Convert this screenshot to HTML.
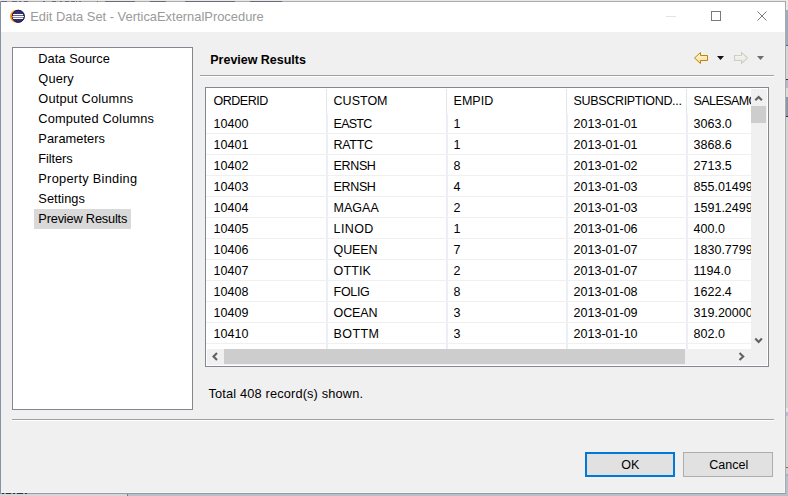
<!DOCTYPE html>
<html><head><meta charset="utf-8"><style>
html,body{margin:0;padding:0;width:788px;height:496px;overflow:hidden;background:#e6e6e6}
body{position:relative;font-family:"Liberation Sans", sans-serif}
.t{position:absolute;white-space:nowrap}
</style></head><body>
<div style="position:absolute;left:0;top:0;width:788px;height:496px;background:#e8e8e8"></div><div style="position:absolute;left:786px;top:0px;width:2px;height:10px;background:#e8e8e8"></div><div style="position:absolute;left:786px;top:10px;width:2px;height:35px;background:#9dabbf"></div><div style="position:absolute;left:786px;top:45px;width:2px;height:1px;background:#5a6070"></div><div style="position:absolute;left:786px;top:46px;width:2px;height:33px;background:#d6d6d6"></div><div style="position:absolute;left:786px;top:79px;width:2px;height:1px;background:#303030"></div><div style="position:absolute;left:786px;top:80px;width:2px;height:8px;background:#b8b8c8"></div><div style="position:absolute;left:786px;top:88px;width:2px;height:9px;background:#dcdcdc"></div><div style="position:absolute;left:786px;top:97px;width:2px;height:19px;background:#8c96ab"></div><div style="position:absolute;left:786px;top:116px;width:2px;height:1px;background:#303030"></div><div style="position:absolute;left:786px;top:117px;width:2px;height:291px;background:#d4d4d4"></div><div style="position:absolute;left:786px;top:408px;width:2px;height:4px;background:#e6e6e6"></div><div style="position:absolute;left:786px;top:412px;width:2px;height:4px;background:#b8bcd8"></div><div style="position:absolute;left:786px;top:416px;width:2px;height:51px;background:#d4d4d4"></div><div style="position:absolute;left:786px;top:467px;width:2px;height:1px;background:#707070"></div><div style="position:absolute;left:786px;top:468px;width:2px;height:6px;background:#d0d0d0"></div><div style="position:absolute;left:786px;top:474px;width:2px;height:2px;background:#9fb0d0"></div><div style="position:absolute;left:786px;top:476px;width:2px;height:20px;background:#b6bfcc"></div><div style="position:absolute;left:0;top:494px;width:127px;height:2px;background:#d6d6d6"></div><div style="position:absolute;left:127px;top:494px;width:1px;height:2px;background:#6a80a0"></div><div style="position:absolute;left:128px;top:494px;width:660px;height:2px;background:#b6bfcc"></div><div style="position:absolute;left:0;top:1px;width:784px;height:491px;border:1px solid #aaaaaa;border-left-color:#8494a8;border-bottom-color:#959ca4;background:#f0f0f0"></div><div style="position:absolute;left:784px;top:32px;width:1px;height:461px;background:#f5f5f5"></div><div style="position:absolute;left:1px;top:492px;width:784px;height:1px;background:#f5f5f5"></div><div style="position:absolute;left:1px;top:1px;width:6px;height:1px;background:#6a6a78"></div><div style="position:absolute;left:12px;top:1px;width:5px;height:1px;background:#6a6a78"></div><div style="position:absolute;left:19px;top:1px;width:2px;height:1px;background:#6a6a78"></div><div style="position:absolute;left:24px;top:1px;width:4px;height:1px;background:#6a6a78"></div><div style="position:absolute;left:43px;top:1px;width:2px;height:1px;background:#6a6a78"></div><div style="position:absolute;left:52px;top:1px;width:4px;height:1px;background:#6a6a78"></div><div style="position:absolute;left:60px;top:1px;width:2px;height:1px;background:#6a6a78"></div><div style="position:absolute;left:65px;top:1px;width:4px;height:1px;background:#6a6a78"></div><div style="position:absolute;left:71px;top:1px;width:4px;height:1px;background:#6a6a78"></div><div style="position:absolute;left:76px;top:1px;width:1px;height:1px;background:#6a6a78"></div><div style="position:absolute;left:79px;top:1px;width:2px;height:1px;background:#6a6a78"></div><div style="position:absolute;left:97px;top:1px;width:1px;height:1px;background:#6a6a78"></div><div style="position:absolute;left:105px;top:1px;width:30px;height:1px;background:#6a6a78"></div><div style="position:absolute;left:150px;top:1px;width:16px;height:1px;background:#6a6a78"></div><div style="position:absolute;left:185px;top:1px;width:50px;height:1px;background:#6a6a78"></div><div style="position:absolute;left:250px;top:1px;width:32px;height:1px;background:#6a6a78"></div><div style="position:absolute;left:2px;top:493px;width:2px;height:1px;background:#303040"></div><div style="position:absolute;left:6px;top:493px;width:5px;height:1px;background:#303040"></div><div style="position:absolute;left:13px;top:493px;width:2px;height:1px;background:#303040"></div><div style="position:absolute;left:17px;top:493px;width:6px;height:1px;background:#303040"></div><div style="position:absolute;left:25px;top:493px;width:2px;height:1px;background:#303040"></div><div style="position:absolute;left:1px;top:2px;width:784px;height:30px;background:#fff"></div><svg style="position:absolute;left:0;top:0" width="60" height="32" viewBox="0 0 60 32">
<circle cx="16.5" cy="16.25" r="6.45" fill="#fb9a1c"/>
<circle cx="18.3" cy="16.25" r="6.45" fill="#372d72"/>
<circle cx="18.3" cy="16.25" r="6.0" fill="none" stroke="#1d1745" stroke-width="0.9"/>
<rect x="13.0" y="13.9" width="10.1" height="1.25" rx="0.5" fill="#fff"/>
<rect x="12.3" y="15.9" width="11.7" height="1.25" rx="0.5" fill="#fff"/>
<rect x="13.0" y="17.8" width="10.1" height="1.25" rx="0.5" fill="#fff"/>
</svg><div class="t" style="left:30.20px;top:9.03px;font-size:12.9px;line-height:15px;color:#9a9a9a;">Edit Data Set - VerticaExternalProcedure</div>
<svg style="position:absolute;left:650px;top:0" width="130" height="32" viewBox="650 0 130 32">
<rect x="666" y="16" width="10" height="1" fill="#e3e3e3"/>
<rect x="711.5" y="11.5" width="9" height="9" fill="none" stroke="#7a7a7a" stroke-width="1"/>
<path d="M757.5 11.5 L766.5 20.5 M766.5 11.5 L757.5 20.5" stroke="#7a7a7a" stroke-width="1" fill="none"/>
</svg><div style="position:absolute;left:12px;top:47px;width:179px;height:361px;border:1px solid #828790;background:#fff"></div><div style="position:absolute;left:34px;top:209px;width:97px;height:20px;background:#d9d9d9"></div><div class="t" style="left:38.30px;top:51.06px;font-size:12.8px;line-height:15px;color:#000;letter-spacing:0.05px;">Data Source</div>
<div class="t" style="left:38.30px;top:71.06px;font-size:12.8px;line-height:15px;color:#000;letter-spacing:0.15px;">Query</div>
<div class="t" style="left:38.30px;top:91.06px;font-size:12.8px;line-height:15px;color:#000;letter-spacing:0.18px;">Output Columns</div>
<div class="t" style="left:38.30px;top:111.06px;font-size:12.8px;line-height:15px;color:#000;letter-spacing:0.17px;">Computed Columns</div>
<div class="t" style="left:38.30px;top:131.06px;font-size:12.8px;line-height:15px;color:#000;letter-spacing:0.06px;">Parameters</div>
<div class="t" style="left:38.30px;top:151.06px;font-size:12.8px;line-height:15px;color:#000;letter-spacing:-0.1px;">Filters</div>
<div class="t" style="left:38.30px;top:171.06px;font-size:12.8px;line-height:15px;color:#000;letter-spacing:0.28px;">Property Binding</div>
<div class="t" style="left:38.30px;top:191.06px;font-size:12.8px;line-height:15px;color:#000;letter-spacing:0.05px;">Settings</div>
<div class="t" style="left:38.30px;top:211.06px;font-size:12.8px;line-height:15px;color:#000;letter-spacing:-0.19px;">Preview Results</div>
<div class="t" style="left:210.30px;top:52.57px;font-size:12.5px;line-height:15px;color:#000;font-weight:bold;letter-spacing:-0.02px;">Preview Results</div>
<div style="position:absolute;left:200px;top:75px;width:574px;height:1px;background:#a0a0a0"></div><div style="position:absolute;left:200px;top:76px;width:574px;height:1px;background:#fff"></div><svg style="position:absolute;left:680px;top:40px" width="100" height="30" viewBox="680 40 100 30">
<defs>
<linearGradient id="ga" x1="0" y1="0" x2="0" y2="1"><stop offset="0" stop-color="#fffbea"/><stop offset="1" stop-color="#fcdc82"/></linearGradient>
<linearGradient id="gb" x1="0" y1="0" x2="0" y2="1"><stop offset="0" stop-color="#fafaf6"/><stop offset="1" stop-color="#e4e4dc"/></linearGradient>
</defs>
<path d="M694.5 58 L700.5 52.5 L700.5 55.5 L707.5 55.5 L707.5 60.5 L700.5 60.5 L700.5 63.5 Z" fill="url(#ga)" stroke="#bd8310" stroke-width="1" stroke-linejoin="miter"/>
<path d="M717 56 L724 56 L720.5 60 Z" fill="#111"/>
<path d="M747.5 58 L741.5 52.5 L741.5 55.5 L734.5 55.5 L734.5 60.5 L741.5 60.5 L741.5 63.5 Z" fill="url(#gb)" stroke="#cfcfc6" stroke-width="1.1"/>
<path d="M757 56 L764 56 L760.5 60 Z" fill="#6e6e6e"/>
</svg><div style="position:absolute;left:205px;top:87px;width:562px;height:278px;border:1px solid #828790;background:#fff"></div><div style="position:absolute;left:326px;top:89px;width:1px;height:24px;background:#e5e5e5"></div><div style="position:absolute;left:326px;top:113px;width:1px;height:236px;background:#e6eff9"></div><div style="position:absolute;left:327px;top:113px;width:1px;height:236px;background:#efefef"></div><div style="position:absolute;left:446px;top:89px;width:1px;height:24px;background:#e5e5e5"></div><div style="position:absolute;left:446px;top:113px;width:1px;height:236px;background:#e6eff9"></div><div style="position:absolute;left:447px;top:113px;width:1px;height:236px;background:#efefef"></div><div style="position:absolute;left:566px;top:89px;width:1px;height:24px;background:#e5e5e5"></div><div style="position:absolute;left:566px;top:113px;width:1px;height:236px;background:#e6eff9"></div><div style="position:absolute;left:567px;top:113px;width:1px;height:236px;background:#efefef"></div><div style="position:absolute;left:686px;top:89px;width:1px;height:24px;background:#e5e5e5"></div><div style="position:absolute;left:686px;top:113px;width:1px;height:236px;background:#e6eff9"></div><div style="position:absolute;left:687px;top:113px;width:1px;height:236px;background:#efefef"></div><div style="position:absolute;left:206px;top:133px;width:545px;height:1px;background:#f0f0f0"></div><div style="position:absolute;left:206px;top:154px;width:545px;height:1px;background:#f0f0f0"></div><div style="position:absolute;left:206px;top:175px;width:545px;height:1px;background:#f0f0f0"></div><div style="position:absolute;left:206px;top:196px;width:545px;height:1px;background:#f0f0f0"></div><div style="position:absolute;left:206px;top:217px;width:545px;height:1px;background:#f0f0f0"></div><div style="position:absolute;left:206px;top:238px;width:545px;height:1px;background:#f0f0f0"></div><div style="position:absolute;left:206px;top:259px;width:545px;height:1px;background:#f0f0f0"></div><div style="position:absolute;left:206px;top:280px;width:545px;height:1px;background:#f0f0f0"></div><div style="position:absolute;left:206px;top:301px;width:545px;height:1px;background:#f0f0f0"></div><div style="position:absolute;left:206px;top:322px;width:545px;height:1px;background:#f0f0f0"></div><div style="position:absolute;left:206px;top:343px;width:545px;height:1px;background:#f0f0f0"></div><div style="position:absolute;left:206px;top:89px;width:545px;height:260px;overflow:hidden"><div class="t" style="left:7.60px;top:4.77px;font-size:12.5px;line-height:15px;color:#000;letter-spacing:-0.5px;">ORDERID</div>
<div class="t" style="left:127.60px;top:4.77px;font-size:12.5px;line-height:15px;color:#000;">CUSTOM</div>
<div class="t" style="left:247.60px;top:4.77px;font-size:12.5px;line-height:15px;color:#000;">EMPID</div>
<div class="t" style="left:367.60px;top:4.77px;font-size:12.5px;line-height:15px;color:#000;letter-spacing:-0.33px;">SUBSCRIPTIOND...</div>
<div class="t" style="left:487.60px;top:4.77px;font-size:12.5px;line-height:15px;color:#000;letter-spacing:-0.6px;">SALESAMOUNT</div>
<div class="t" style="left:7.60px;top:27.67px;font-size:12.5px;line-height:15px;color:#000;">10400</div>
<div class="t" style="left:127.60px;top:27.67px;font-size:12.5px;line-height:15px;color:#000;letter-spacing:-0.75px;">EASTC</div>
<div class="t" style="left:247.60px;top:27.67px;font-size:12.5px;line-height:15px;color:#000;">1</div>
<div class="t" style="left:367.60px;top:27.67px;font-size:12.5px;line-height:15px;color:#000;">2013-01-01</div>
<div class="t" style="left:487.60px;top:27.67px;font-size:12.5px;line-height:15px;color:#000;">3063.0</div>
<div class="t" style="left:7.60px;top:48.67px;font-size:12.5px;line-height:15px;color:#000;">10401</div>
<div class="t" style="left:127.60px;top:48.67px;font-size:12.5px;line-height:15px;color:#000;letter-spacing:-0.33px;">RATTC</div>
<div class="t" style="left:247.60px;top:48.67px;font-size:12.5px;line-height:15px;color:#000;">1</div>
<div class="t" style="left:367.60px;top:48.67px;font-size:12.5px;line-height:15px;color:#000;">2013-01-01</div>
<div class="t" style="left:487.60px;top:48.67px;font-size:12.5px;line-height:15px;color:#000;">3868.6</div>
<div class="t" style="left:7.60px;top:69.67px;font-size:12.5px;line-height:15px;color:#000;">10402</div>
<div class="t" style="left:127.60px;top:69.67px;font-size:12.5px;line-height:15px;color:#000;letter-spacing:-0.37px;">ERNSH</div>
<div class="t" style="left:247.60px;top:69.67px;font-size:12.5px;line-height:15px;color:#000;">8</div>
<div class="t" style="left:367.60px;top:69.67px;font-size:12.5px;line-height:15px;color:#000;">2013-01-02</div>
<div class="t" style="left:487.60px;top:69.67px;font-size:12.5px;line-height:15px;color:#000;">2713.5</div>
<div class="t" style="left:7.60px;top:90.67px;font-size:12.5px;line-height:15px;color:#000;">10403</div>
<div class="t" style="left:127.60px;top:90.67px;font-size:12.5px;line-height:15px;color:#000;letter-spacing:-0.37px;">ERNSH</div>
<div class="t" style="left:247.60px;top:90.67px;font-size:12.5px;line-height:15px;color:#000;">4</div>
<div class="t" style="left:367.60px;top:90.67px;font-size:12.5px;line-height:15px;color:#000;">2013-01-03</div>
<div class="t" style="left:487.60px;top:90.67px;font-size:12.5px;line-height:15px;color:#000;">855.0149999999999</div>
<div class="t" style="left:7.60px;top:111.67px;font-size:12.5px;line-height:15px;color:#000;">10404</div>
<div class="t" style="left:127.60px;top:111.67px;font-size:12.5px;line-height:15px;color:#000;">MAGAA</div>
<div class="t" style="left:247.60px;top:111.67px;font-size:12.5px;line-height:15px;color:#000;">2</div>
<div class="t" style="left:367.60px;top:111.67px;font-size:12.5px;line-height:15px;color:#000;">2013-01-03</div>
<div class="t" style="left:487.60px;top:111.67px;font-size:12.5px;line-height:15px;color:#000;">1591.2499999999998</div>
<div class="t" style="left:7.60px;top:132.67px;font-size:12.5px;line-height:15px;color:#000;">10405</div>
<div class="t" style="left:127.60px;top:132.67px;font-size:12.5px;line-height:15px;color:#000;letter-spacing:0.4px;">LINOD</div>
<div class="t" style="left:247.60px;top:132.67px;font-size:12.5px;line-height:15px;color:#000;">1</div>
<div class="t" style="left:367.60px;top:132.67px;font-size:12.5px;line-height:15px;color:#000;">2013-01-06</div>
<div class="t" style="left:487.60px;top:132.67px;font-size:12.5px;line-height:15px;color:#000;">400.0</div>
<div class="t" style="left:7.60px;top:153.67px;font-size:12.5px;line-height:15px;color:#000;">10406</div>
<div class="t" style="left:127.60px;top:153.67px;font-size:12.5px;line-height:15px;color:#000;letter-spacing:-0.12px;">QUEEN</div>
<div class="t" style="left:247.60px;top:153.67px;font-size:12.5px;line-height:15px;color:#000;">7</div>
<div class="t" style="left:367.60px;top:153.67px;font-size:12.5px;line-height:15px;color:#000;">2013-01-07</div>
<div class="t" style="left:487.60px;top:153.67px;font-size:12.5px;line-height:15px;color:#000;">1830.7799999999997</div>
<div class="t" style="left:7.60px;top:174.67px;font-size:12.5px;line-height:15px;color:#000;">10407</div>
<div class="t" style="left:127.60px;top:174.67px;font-size:12.5px;line-height:15px;color:#000;letter-spacing:0.12px;">OTTIK</div>
<div class="t" style="left:247.60px;top:174.67px;font-size:12.5px;line-height:15px;color:#000;">2</div>
<div class="t" style="left:367.60px;top:174.67px;font-size:12.5px;line-height:15px;color:#000;">2013-01-07</div>
<div class="t" style="left:487.60px;top:174.67px;font-size:12.5px;line-height:15px;color:#000;">1194.0</div>
<div class="t" style="left:7.60px;top:195.67px;font-size:12.5px;line-height:15px;color:#000;">10408</div>
<div class="t" style="left:127.60px;top:195.67px;font-size:12.5px;line-height:15px;color:#000;letter-spacing:-0.33px;">FOLIG</div>
<div class="t" style="left:247.60px;top:195.67px;font-size:12.5px;line-height:15px;color:#000;">8</div>
<div class="t" style="left:367.60px;top:195.67px;font-size:12.5px;line-height:15px;color:#000;">2013-01-08</div>
<div class="t" style="left:487.60px;top:195.67px;font-size:12.5px;line-height:15px;color:#000;">1622.4</div>
<div class="t" style="left:7.60px;top:216.67px;font-size:12.5px;line-height:15px;color:#000;">10409</div>
<div class="t" style="left:127.60px;top:216.67px;font-size:12.5px;line-height:15px;color:#000;letter-spacing:-0.12px;">OCEAN</div>
<div class="t" style="left:247.60px;top:216.67px;font-size:12.5px;line-height:15px;color:#000;">3</div>
<div class="t" style="left:367.60px;top:216.67px;font-size:12.5px;line-height:15px;color:#000;">2013-01-09</div>
<div class="t" style="left:487.60px;top:216.67px;font-size:12.5px;line-height:15px;color:#000;">319.20000000000005</div>
<div class="t" style="left:7.60px;top:237.67px;font-size:12.5px;line-height:15px;color:#000;">10410</div>
<div class="t" style="left:127.60px;top:237.67px;font-size:12.5px;line-height:15px;color:#000;letter-spacing:0.4px;">BOTTM</div>
<div class="t" style="left:247.60px;top:237.67px;font-size:12.5px;line-height:15px;color:#000;">3</div>
<div class="t" style="left:367.60px;top:237.67px;font-size:12.5px;line-height:15px;color:#000;">2013-01-10</div>
<div class="t" style="left:487.60px;top:237.67px;font-size:12.5px;line-height:15px;color:#000;">802.0</div>
</div><div style="position:absolute;left:751px;top:89px;width:16px;height:276px;background:#f0f0f0"></div><div style="position:absolute;left:751px;top:106px;width:15px;height:17px;background:#cdcdcd"></div><div style="position:absolute;left:207px;top:349px;width:544px;height:16px;background:#f0f0f0"></div><div style="position:absolute;left:224px;top:349px;width:461px;height:15px;background:#cdcdcd"></div><svg style="position:absolute;left:200px;top:80px" width="580" height="300" viewBox="200 80 580 300">
<path d="M755.3 100.2 L758.6 96.9 L761.9 100.2" fill="none" stroke="#606060" stroke-width="2.1"/>
<path d="M755.3 338.6 L758.6 341.9 L761.9 338.6" fill="none" stroke="#606060" stroke-width="2.1"/>
<path d="M217.0 353.0 L213.5 356.5 L217.0 360.0" fill="none" stroke="#606060" stroke-width="2.1"/>
<path d="M739.5 353.0 L743.2 356.5 L739.5 360.0" fill="none" stroke="#606060" stroke-width="2.1"/>
</svg><div class="t" style="left:208.50px;top:385.96px;font-size:12.8px;line-height:15px;color:#000;letter-spacing:0.15px;">Total 408 record(s) shown.</div>
<div style="position:absolute;left:12px;top:419px;width:762px;height:1px;background:#a0a0a0"></div><div style="position:absolute;left:12px;top:420px;width:762px;height:1px;background:#fff"></div><div style="position:absolute;left:585px;top:452px;width:86px;height:21px;border:2px solid #0078d7;background:#e1e1e1"></div><div class="t" style="left:621.30px;top:458.17px;font-size:12.5px;line-height:15px;color:#000;">OK</div>
<div style="position:absolute;left:683px;top:452px;width:88px;height:23px;border:1px solid #adadad;background:#e1e1e1"></div><div class="t" style="left:709.30px;top:458.17px;font-size:12.5px;line-height:15px;color:#000;">Cancel</div>

</body></html>
